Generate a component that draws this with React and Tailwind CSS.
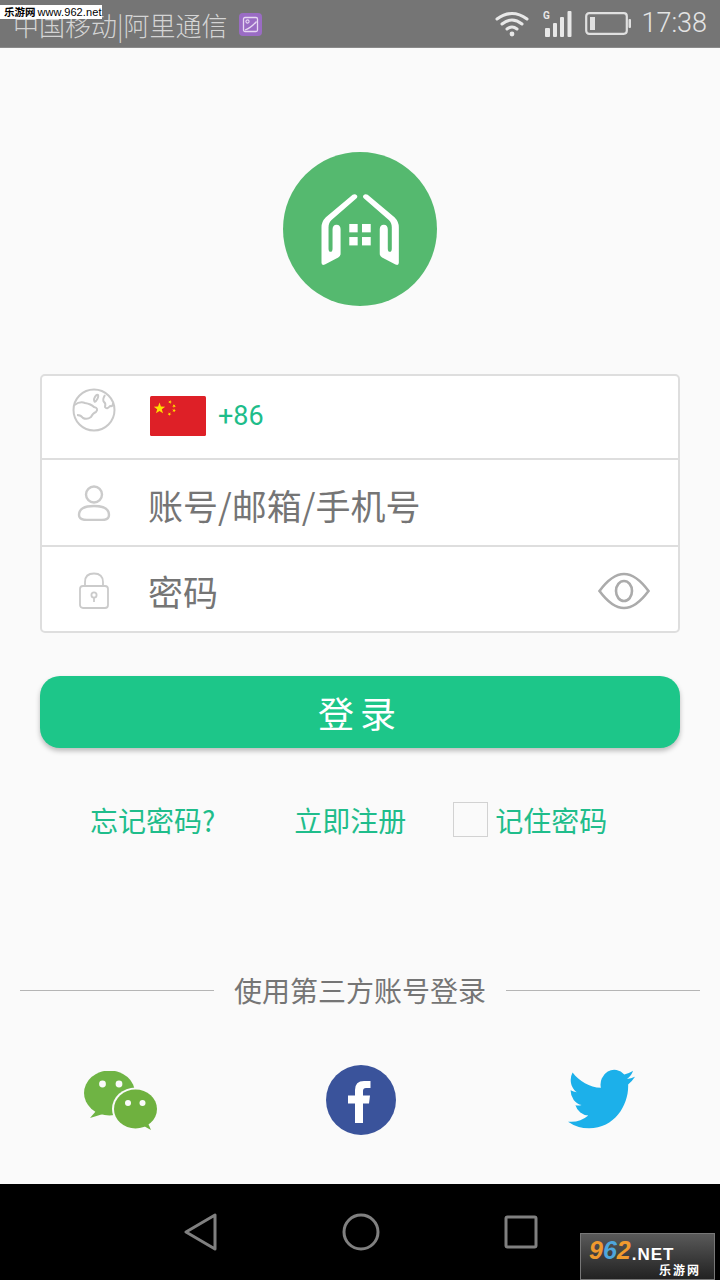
import React from "react";

const cjk = "font-['Noto_Sans_CJK_SC','Noto_Sans',sans-serif]";

function StatusBar() {
  return (
    <div className="relative flex h-12 shrink-0 items-center bg-[#757575] border-b border-[#8a8a8a] pl-[13px] pr-[13px]">
      <span className="font-['Noto_Sans_CJK_SC',sans-serif] text-[26px] font-light leading-none text-[#d4d4d4] mt-[2px] whitespace-nowrap">中国移动|阿里通信</span>
      <svg className="ml-[11px] mt-[1px]" width="23" height="23" viewBox="0 0 23 23">
        <rect width="23" height="23" rx="4" fill="#9a6cc4" />
        <rect x="4.5" y="4.5" width="14" height="14" rx="1.5" fill="none" stroke="#e6d8f2" strokeWidth="1.3" />
        <circle cx="8.5" cy="8.5" r="1.6" fill="none" stroke="#e6d8f2" strokeWidth="1.1" />
        <path d="M6 17 Q12 15 17.5 8.5" fill="none" stroke="#e6d8f2" strokeWidth="1.3" />
      </svg>
      <div className="ml-auto flex items-center">
        <svg width="34" height="26" viewBox="0 0 34 26" fill="none" stroke="#e8e8e8" strokeWidth="3" strokeLinecap="round">
          <path d="M2 8 Q17 -3 32 8" />
          <path d="M7 13 Q17 5 27 13" />
          <path d="M12 18 Q17 14 22 18" />
          <circle cx="17" cy="23" r="2.4" fill="#e8e8e8" stroke="none" />
        </svg>
        <svg className="ml-[14px]" width="31" height="28" viewBox="0 0 31 28">
          <text x="0" y="9" fontFamily="Roboto, sans-serif" fontWeight="700" fontSize="10" fill="#e8e8e8">G</text>
          <rect x="2" y="18" width="5" height="9" rx="1" fill="#e8e8e8" />
          <rect x="10" y="13" width="4" height="14" rx="1" fill="#e8e8e8" />
          <rect x="17" y="7" width="4" height="20" rx="1" fill="#e8e8e8" />
          <rect x="24.5" y="1" width="4" height="26" rx="1" fill="#e8e8e8" />
        </svg>
        <svg className="ml-[11px]" width="46" height="23" viewBox="0 0 46 23" fill="none">
          <rect x="1.2" y="1.2" width="40.6" height="20.6" rx="3" stroke="#e0e0e0" strokeWidth="2.2" />
          <rect x="5" y="5" width="5" height="13" fill="#e0e0e0" />
          <rect x="43.5" y="7" width="2.5" height="9" rx="1" fill="#e0e0e0" />
        </svg>
        <span className="ml-[10px] font-['Roboto',sans-serif] text-[27px] font-light leading-none text-[#e4e4e4]">17:38</span>
      </div>
      <div className="absolute left-0 top-[5px] flex h-[14px] w-[102px] items-center bg-white pl-[4px] text-[10.5px] font-bold leading-none text-black whitespace-nowrap font-['Noto_Sans_CJK_SC',sans-serif]">
        乐游网 <span className="ml-[2px] font-['Liberation_Sans',sans-serif] text-[11px] font-normal tracking-[0.1px]">www.962.net</span>
      </div>
    </div>
  );
}

function Logo() {
  const side = "M248 165 Q255 160 261 167 Q264 172 258 177 L185 240 Q176 248 176 262 L176 325 Q176 335 182 335 Q188 335 188 325 L188 268 Q188 254 200 254 Q212 254 212 268 L212 340 Q212 349 205 352 L165 373 Q155 377 155 368 L155 262 Q155 245 168 232 Z";
  return (
    <svg width="154" height="154" viewBox="40 37 460 460" className="shrink-0">
      <circle cx="270" cy="267" r="230" fill="#55b96f" />
      <path d={side} fill="#fff" />
      <path d={side} fill="#fff" transform="matrix(-1 0 0 1 541 0)" />
      <rect x="238" y="252" width="25" height="25" fill="#fff" />
      <rect x="276" y="252" width="26" height="25" fill="#fff" />
      <rect x="238" y="291" width="25" height="25" fill="#fff" />
      <rect x="276" y="291" width="26" height="25" fill="#fff" />
    </svg>
  );
}

function Globe() {
  return (
    <svg width="44" height="44" viewBox="0 0 44 44" fill="none" stroke="#c9c9c9" strokeWidth="2" strokeLinejoin="round" className="mt-[-14px]">
      <circle cx="22" cy="22" r="20.5" />
      <path d="M2.5 17 Q8 13 13 15 Q19 16 22 19 Q27 20 24 24 Q21 25 19 29 Q15 32 11 30 Q9 27 5 27" />
      <path d="M22 11 Q24 6 26 7 Q27 9 24 13 Q22 15 22 11 Z" />
      <path d="M33 7 Q30 12 32 14 Q34 15 33 19 Q35 22 38 18 Q41 19 41 15" />
    </svg>
  );
}

function Person() {
  return (
    <svg width="34" height="36" viewBox="0 0 34 36" fill="none" stroke="#cbcbcb" strokeWidth="2.4" className="mt-[1px]">
      <circle cx="17" cy="9.5" r="8" />
      <path d="M10 35 H25 Q32 35 32 30 Q32 21 17 21 Q2 21 2 30 Q2 35 10 35 Z" />
    </svg>
  );
}

function Lock() {
  return (
    <svg width="30" height="37" viewBox="0 0 30 37" fill="none" stroke="#cbcbcb" strokeWidth="1.8" className="mt-[3px]">
      <path d="M6 14 V10 Q6 1.5 15 1.5 Q24 1.5 24 10 V14" />
      <rect x="1" y="14" width="28" height="22" rx="3" />
      <circle cx="15" cy="23" r="2.6" />
      <path d="M15 25.5 V30" />
    </svg>
  );
}

function Flag() {
  const star = (cx, cy, r, rot = 0) => {
    const pts = [];
    for (let i = 0; i < 10; i++) {
      const a = ((i * 36 - 90 + rot) * Math.PI) / 180;
      const rr = i % 2 ? r * 0.4 : r;
      pts.push(`${cx + rr * Math.cos(a)},${cy + rr * Math.sin(a)}`);
    }
    return <polygon key={`${cx}-${cy}`} points={pts.join(" ")} fill="#ffde00" />;
  };
  return (
    <svg width="56" height="40" viewBox="0 0 56 40" className="shrink-0">
      <rect width="56" height="40" rx="1.5" fill="#de2027" />
      {star(9.5, 12.5, 6)}
      {star(20, 6, 2, 20)}
      {star(24, 10, 2, 40)}
      {star(24, 14.5, 2, 10)}
      {star(19.5, 18, 2, 30)}
    </svg>
  );
}

function Eye() {
  return (
    <svg width="52" height="38" viewBox="0 0 52 38" fill="none" stroke="#ababab" strokeWidth="2.6">
      <path d="M1.5 19 Q14 2 26 2 Q38 2 50.5 19 Q38 36 26 36 Q14 36 1.5 19 Z" />
      <ellipse cx="26" cy="19" rx="8" ry="10" />
    </svg>
  );
}

function Row({ icon, children, className }) {
  return (
    <div className={`flex items-center ${className}`}>
      <div className="flex w-[104px] shrink-0 justify-center">{icon}</div>
      {children}
    </div>
  );
}

function LoginCard() {
  return (
    <div className="mx-10 mt-[68px] flex flex-col rounded-[5px] border-2 border-[#dedede] bg-white">
      <Row icon={<Globe />} className="h-[84px] border-b-2 border-[#dedede]">
        <div className="ml-[4px] mt-[-2px] flex items-center">
          <Flag />
          <span className="ml-[12px] font-['Roboto',sans-serif] text-[27px] leading-none text-[#1ebd8a]">+86</span>
        </div>
      </Row>
      <Row icon={<Person />} className="h-[87px] border-b-2 border-[#dedede]">
        <span className={`${cjk} ml-[2px] mt-[3px] text-[35px] leading-none text-[#757575]`}>账号/邮箱/手机号</span>
      </Row>
      <Row icon={<Lock />} className="h-[84px] pr-[28px]">
        <span className={`${cjk} ml-[2px] mt-[3px] text-[35px] leading-none text-[#757575]`}>密码</span>
        <div className="ml-auto mt-[3px]"><Eye /></div>
      </Row>
    </div>
  );
}

function LinkRow() {
  const link = `${cjk} text-[28px] leading-none text-[#1fbd8b] whitespace-nowrap`;
  return (
    <div className="mt-[54px] flex h-[35px] items-center pl-[90px]">
      <span className={link}>忘记密码?</span>
      <span className={`${link} ml-[79px]`}>立即注册</span>
      <span className="ml-[47px] h-[35px] w-[35px] shrink-0 border border-[#d2d2d2] bg-[#fafafa]" />
      <span className={`${link} ml-[7px]`}>记住密码</span>
    </div>
  );
}

function Divider() {
  return (
    <div className="mt-[133px] flex h-10 items-center px-5">
      <div className="h-px flex-1 bg-[#b5b5b5]" />
      <span className={`${cjk} mx-5 text-[28px] leading-none text-[#757575]`}>使用第三方账号登录</span>
      <div className="h-px flex-1 bg-[#b5b5b5]" />
    </div>
  );
}

function WeChat() {
  return (
    <svg width="74" height="60" viewBox="0 0 74 60">
      <ellipse cx="25.5" cy="22" rx="25.5" ry="22.5" fill="#6fb444" />
      <path d="M12 40 L6 47 L19 43 Z" fill="#6fb444" />
      <ellipse cx="51.5" cy="38" rx="23.5" ry="21.5" fill="#fafafa" />
      <ellipse cx="51.5" cy="38" rx="21.5" ry="19.5" fill="#6fb13f" />
      <path d="M58 54 L67 59 L63 50 Z" fill="#6fb13f" />
      <circle cx="18.5" cy="13" r="3.4" fill="#fafafa" />
      <circle cx="35" cy="13" r="3.4" fill="#fafafa" />
      <circle cx="44" cy="32" r="3" fill="#fafafa" />
      <circle cx="58.5" cy="32" r="3" fill="#fafafa" />
    </svg>
  );
}

function Facebook() {
  return (
    <svg width="70" height="70" viewBox="0 0 70 70">
      <circle cx="35" cy="35" r="35" fill="#3a539b" />
      <path d="M29 58 V38.5 H22 V30.5 H29 V25 Q29 16 38 16 H44.5 V23 H40 Q37 23 37 26 V30.5 H44 L43 38.5 H37 V58 Z" fill="#fff" />
    </svg>
  );
}

function Twitter() {
  return (
    <svg width="67" height="60" viewBox="0 2 24 20" preserveAspectRatio="none">
      <path fill="#1cb0ea" d="M23.953 4.57a10 10 0 01-2.825.775 4.958 4.958 0 002.163-2.723c-.951.555-2.005.959-3.127 1.184a4.92 4.92 0 00-8.384 4.482C7.69 8.095 4.067 6.13 1.64 3.162a4.822 4.822 0 00-.666 2.475c0 1.71.87 3.213 2.188 4.096a4.904 4.904 0 01-2.228-.616v.06a4.923 4.923 0 003.946 4.827 4.996 4.996 0 01-2.212.085 4.936 4.936 0 004.604 3.417 9.867 9.867 0 01-6.102 2.105c-.39 0-.779-.023-1.17-.067a13.995 13.995 0 007.557 2.209c9.053 0 13.998-7.496 13.998-13.985 0-.21 0-.42-.015-.63A9.935 9.935 0 0024 4.59z" />
    </svg>
  );
}

function Socials() {
  return (
    <div className="mt-[55px] flex h-[70px] items-center pl-[84px]">
      <div className="mt-[2px]"><WeChat /></div>
      <div className="ml-[168px]"><Facebook /></div>
      <div className="ml-[172px] mt-[-2px]"><Twitter /></div>
    </div>
  );
}

function NavBar() {
  return (
    <div className="relative flex h-24 shrink-0 items-center bg-black pb-[0px]">
      <div className="ml-[184px] flex items-center">
        <svg width="34" height="38" viewBox="0 0 34 38" fill="none" stroke="#808080" strokeWidth="3" strokeLinejoin="round">
          <path d="M31 2 V36 L2 19 Z" />
        </svg>
        <svg className="ml-[124px]" width="38" height="38" viewBox="0 0 38 38" fill="none" stroke="#808080" strokeWidth="3">
          <circle cx="19" cy="19" r="17" />
        </svg>
        <svg className="ml-[124px]" width="34" height="34" viewBox="0 0 34 34" fill="none" stroke="#808080" strokeWidth="3" strokeLinejoin="round">
          <rect x="2" y="2" width="30" height="30" rx="1.5" />
        </svg>
      </div>
      <div className="absolute bottom-0 left-[580px] flex h-[47px] w-[135px] flex-col justify-center border border-[#777] bg-gradient-to-b from-[#5a5a5a] to-[#222] pl-[8px] leading-none">
        <div className="flex items-end">
          <span className="font-['Liberation_Sans',sans-serif] text-[25px] font-bold italic leading-none">
            <span className="text-[#f09a2e]">9</span>
            <span className="text-[#4ea6dc]">6</span>
            <span className="text-[#f09a2e]">2</span>
          </span>
          <span className="ml-[1px] font-['Liberation_Sans',sans-serif] text-[17px] font-bold leading-none tracking-[1px] text-white">.NET</span>
        </div>
        <div className={`${cjk} mt-[1px] pl-[70px] text-[12px] font-bold leading-none tracking-[2px] text-white`}>乐游网</div>
      </div>
    </div>
  );
}

export default function App() {
  return (
    <div className="flex h-[1280px] w-[720px] flex-col overflow-hidden bg-[#fafafa]">
      <StatusBar />
      <main className="flex min-h-0 flex-1 flex-col">
        <div className="mt-[104px] flex justify-center"><Logo /></div>
        <LoginCard />
        <button className={`${cjk} mx-10 mt-[43px] h-[72px] shrink-0 rounded-[20px] bg-[#1dc689] text-[36px] leading-none tracking-[6px] text-white shadow-[0_3px_5px_rgba(0,0,0,0.25)]`}>登录</button>
        <LinkRow />
        <Divider />
        <Socials />
      </main>
      <NavBar />
    </div>
  );
}
